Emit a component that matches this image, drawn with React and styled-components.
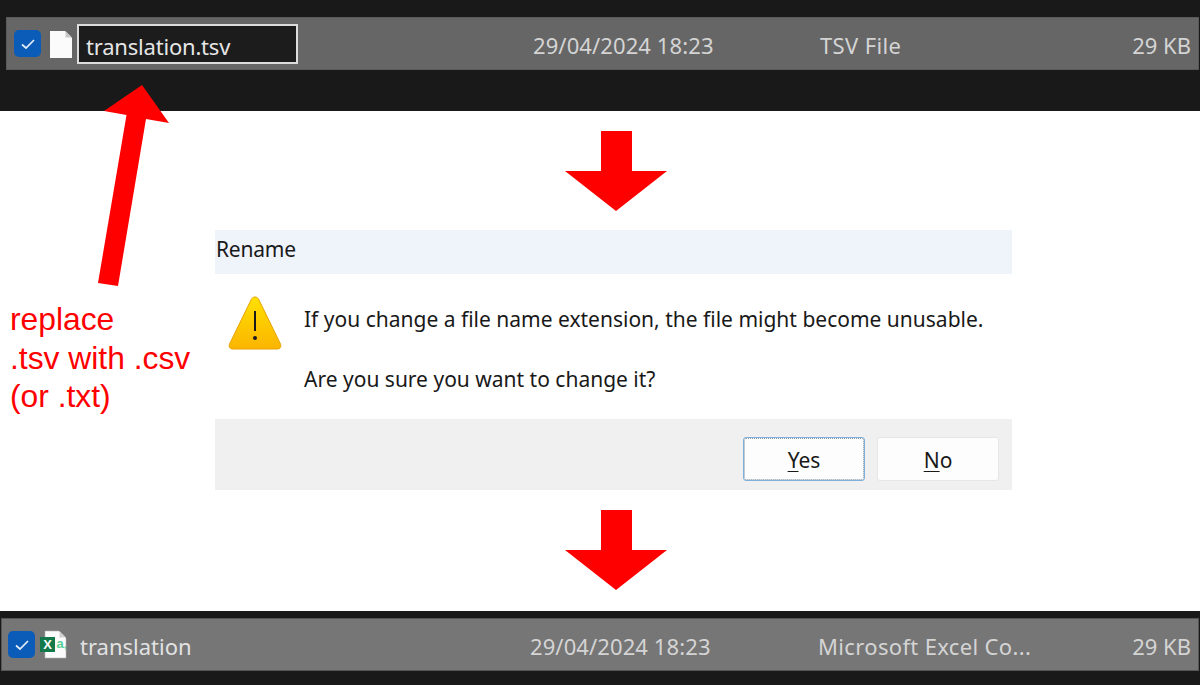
import styled, { createGlobalStyle } from 'styled-components';

const GlobalStyle = createGlobalStyle`
  html, body {
    margin: 0;
    padding: 0;
    background: #fff;
  }
`;

const Page = styled.div`
  position: relative;
  width: 1200px;
  height: 685px;
  overflow: hidden;
  display: flex;
  flex-direction: column;
  font-family: "Noto Sans", "Open Sans", sans-serif;
`;

const Band = styled.div`
  background: #191919;
  height: ${({ $height }) => $height}px;
  padding: ${({ $top }) => $top}px 1px 0 ${({ $left }) => $left}px;
  box-sizing: border-box;
`;

const FileRow = styled.div`
  display: flex;
  align-items: center;
  height: 53px;
  box-sizing: border-box;
  background: ${({ $bg }) => $bg};
  border: 1px solid ${({ $line }) => $line};
  color: #d4d4d4;
  font-size: 22px;
`;

const NameCell = styled.div`
  display: flex;
  align-items: center;
  width: ${({ $width }) => $width}px;
  padding-left: ${({ $pad }) => $pad}px;
  box-sizing: border-box;
  flex-shrink: 0;
`;

const Check = styled.span`
  width: 27px;
  height: 27px;
  border-radius: 5px;
  background: #0b5cb8;
  display: flex;
  align-items: center;
  justify-content: center;
  flex-shrink: 0;
`;

const FileIcon = styled.svg`
  display: block;
  flex-shrink: 0;
  margin-left: ${({ $ml }) => $ml}px;
`;

const NameInput = styled.div`
  width: 221px;
  height: 40px;
  margin-left: 5px;
  box-sizing: border-box;
  border: 2px solid #dcdcdc;
  background: #1c1c1c;
  color: #e6e6e6;
  line-height: 40px;
  padding-left: 7px;
  letter-spacing: -0.2px;
`;

const NameText = styled.span`
  margin-left: 13px;
  padding-top: 2px;
  color: #e2e2e2;
`;

const DateCell = styled.div`
  width: ${({ $width }) => $width}px;
  flex-shrink: 0;
  padding-top: 2px;
  letter-spacing: 0.1px;
`;

const TypeCell = styled.div`
  flex: 1;
  padding-top: 2px;
  letter-spacing: 0.35px;
`;

const SizeCell = styled.div`
  padding-top: 2px;
  padding-right: 7px;
`;

const Middle = styled.div`
  flex: 1;
  display: grid;
  grid-template-columns: 215px 797px;
  background: #fff;
`;

const Note = styled.div`
  padding: 189px 0 0 10px;
  color: #f00;
  font-family: "Liberation Sans", Arial, sans-serif;
  font-size: 31.8px;
  line-height: 38.5px;
`;

const Steps = styled.div`
  display: flex;
  flex-direction: column;
  padding-top: 20px;
`;

const DownArrow = styled.svg`
  display: block;
  margin-left: 350px;
  flex-shrink: 0;
`;

const Dialog = styled.div`
  margin: 19px 0 20px;
  height: 260px;
  display: flex;
  flex-direction: column;
  background: #fff;
  color: #191919;
  font-size: 21px;
`;

const DialogTitle = styled.div`
  flex-shrink: 0;
  height: 44px;
  line-height: 38px;
  padding-left: 1px;
  background: #eff3fa;
  letter-spacing: -0.2px;
`;

const DialogBody = styled.div`
  flex: 1;
  min-height: 0;
  display: flex;
  padding: 22px 0 0 13px;
`;

const Message = styled.div`
  display: flex;
  flex-direction: column;
  gap: 32px;
  margin-left: 22px;
  margin-top: 9px;
`;

const MessageLine = styled.p`
  margin: 0;
  line-height: 28px;
`;

const DialogFooter = styled.div`
  flex-shrink: 0;
  height: 71px;
  box-sizing: border-box;
  background: #f0f0f0;
  display: flex;
  justify-content: flex-end;
  gap: 12px;
  padding: 18px 13px 0 0;
`;

const Button = styled.div`
  width: 122px;
  height: 44px;
  box-sizing: border-box;
  border-radius: 3px;
  background: #fdfdfd;
  border: 1px solid ${({ $focused }) => ($focused ? '#7fb0dc' : '#e6e6e6')};
  outline: ${({ $focused }) => ($focused ? '1px dotted #8a9aa8' : 'none')};
  outline-offset: -2px;
  text-align: center;
  line-height: 44px;
`;

const Mnemonic = styled.span`
  text-decoration: underline;
  text-decoration-thickness: 1px;
  text-underline-offset: 3px;
`;

const UpArrow = styled.svg`
  position: absolute;
  left: 90px;
  top: 80px;
`;

function CheckBox() {
  return (
    <Check>
      <svg width="16" height="12" viewBox="0 0 16 12" fill="none">
        <path d="M2 6.5 L6 10 L14 2" stroke="#e4ecf6" strokeWidth="1.7" />
      </svg>
    </Check>
  );
}

function PlainFile() {
  return (
    <FileIcon $ml={9} width="22" height="28" viewBox="0 0 22 28">
      <path d="M0 1 H15 L22 8 V28 H0 Z" fill="#fbfbfb" />
      <path d="M15.5 1 L22 7.5 H15.5 Z" fill="#c9c9c9" />
    </FileIcon>
  );
}

function ExcelFile() {
  return (
    <FileIcon $ml={5} width="27" height="29" viewBox="0 0 27 29">
      <path d="M5 1 H19 L26 8 V28 H5 Z" fill="#fbfbfb" stroke="#b5b5b5" strokeWidth="0.6" />
      <path d="M19.5 1 L26 7.5 H19.5 Z" fill="#cfcfcf" />
      <rect x="0" y="7" width="15" height="15" fill="#13794a" />
      <text x="7.5" y="19" fontSize="13" fontWeight="700" fontFamily="Liberation Sans" fill="#fff" textAnchor="middle">X</text>
      <text x="16.5" y="18" fontSize="13" fontWeight="700" fontFamily="Liberation Sans" fill="#55cf97">a</text>
      <text x="24" y="18" fontSize="9" fontWeight="700" fontFamily="Liberation Sans" fill="#55cf97">,</text>
    </FileIcon>
  );
}

function Arrow() {
  return (
    <DownArrow width="102" height="80" viewBox="0 0 102 80">
      <path d="M36 0 H67 V40 H102 L51 80 L0 40 H36 Z" fill="#f00" />
    </DownArrow>
  );
}

function WarningIcon() {
  return (
    <svg width="54" height="54" viewBox="0 0 54 54" style={{ flexShrink: 0 }}>
      <defs>
        <linearGradient id="warnFill" x1="0" y1="0" x2="0" y2="1">
          <stop offset="0" stopColor="#ffe100" />
          <stop offset="1" stopColor="#fbb400" />
        </linearGradient>
      </defs>
      <path
        d="M27 1 C29 1 30 2 31 4 L52 47 C54 51 52 53 49 53 H5 C2 53 0 51 2 47 L23 4 C24 2 25 1 27 1 Z"
        fill="url(#warnFill)"
        stroke="#e9a200"
        strokeWidth="1"
      />
      <rect x="26" y="15" width="2" height="20" fill="#1a1a1a" />
      <circle cx="27" cy="42" r="2" fill="#1a1a1a" />
    </svg>
  );
}

export default function App() {
  return (
    <>
      <GlobalStyle />
      <Page>
        <Band $height={111} $top={17} $left={6}>
          <FileRow $bg="#666666" $line="#5a5a5a">
            <NameCell $width={526} $pad={7}>
              <CheckBox />
              <PlainFile />
              <NameInput>translation.tsv</NameInput>
            </NameCell>
            <DateCell $width={287}>29/04/2024 18:23</DateCell>
            <TypeCell>TSV File</TypeCell>
            <SizeCell>29 KB</SizeCell>
          </FileRow>
        </Band>
        <Middle>
          <Note>
            replace
            <br />
            .tsv with .csv
            <br />
            (or .txt)
          </Note>
          <Steps>
            <Arrow />
            <Dialog>
              <DialogTitle>Rename</DialogTitle>
              <DialogBody>
                <WarningIcon />
                <Message>
                  <MessageLine>If you change a file name extension, the file might become unusable.</MessageLine>
                  <MessageLine>Are you sure you want to change it?</MessageLine>
                </Message>
              </DialogBody>
              <DialogFooter>
                <Button $focused>
                  <Mnemonic>Y</Mnemonic>es
                </Button>
                <Button>
                  <Mnemonic>N</Mnemonic>o
                </Button>
              </DialogFooter>
            </Dialog>
            <Arrow />
          </Steps>
        </Middle>
        <Band $height={74} $top={7} $left={1}>
          <FileRow $bg="#767676" $line="#555555">
            <NameCell $width={528} $pad={6}>
              <CheckBox />
              <ExcelFile />
              <NameText>translation</NameText>
            </NameCell>
            <DateCell $width={288}>29/04/2024 18:23</DateCell>
            <TypeCell>Microsoft Excel Co...</TypeCell>
            <SizeCell>29 KB</SizeCell>
          </FileRow>
        </Band>
        <UpArrow width="90" height="210" viewBox="0 0 90 210">
          <path d="M52 5 L14 31 L36.5 35 L8 203 L28 206 L56 39 L79 43 Z" fill="#f00" />
        </UpArrow>
      </Page>
    </>
  );
}
